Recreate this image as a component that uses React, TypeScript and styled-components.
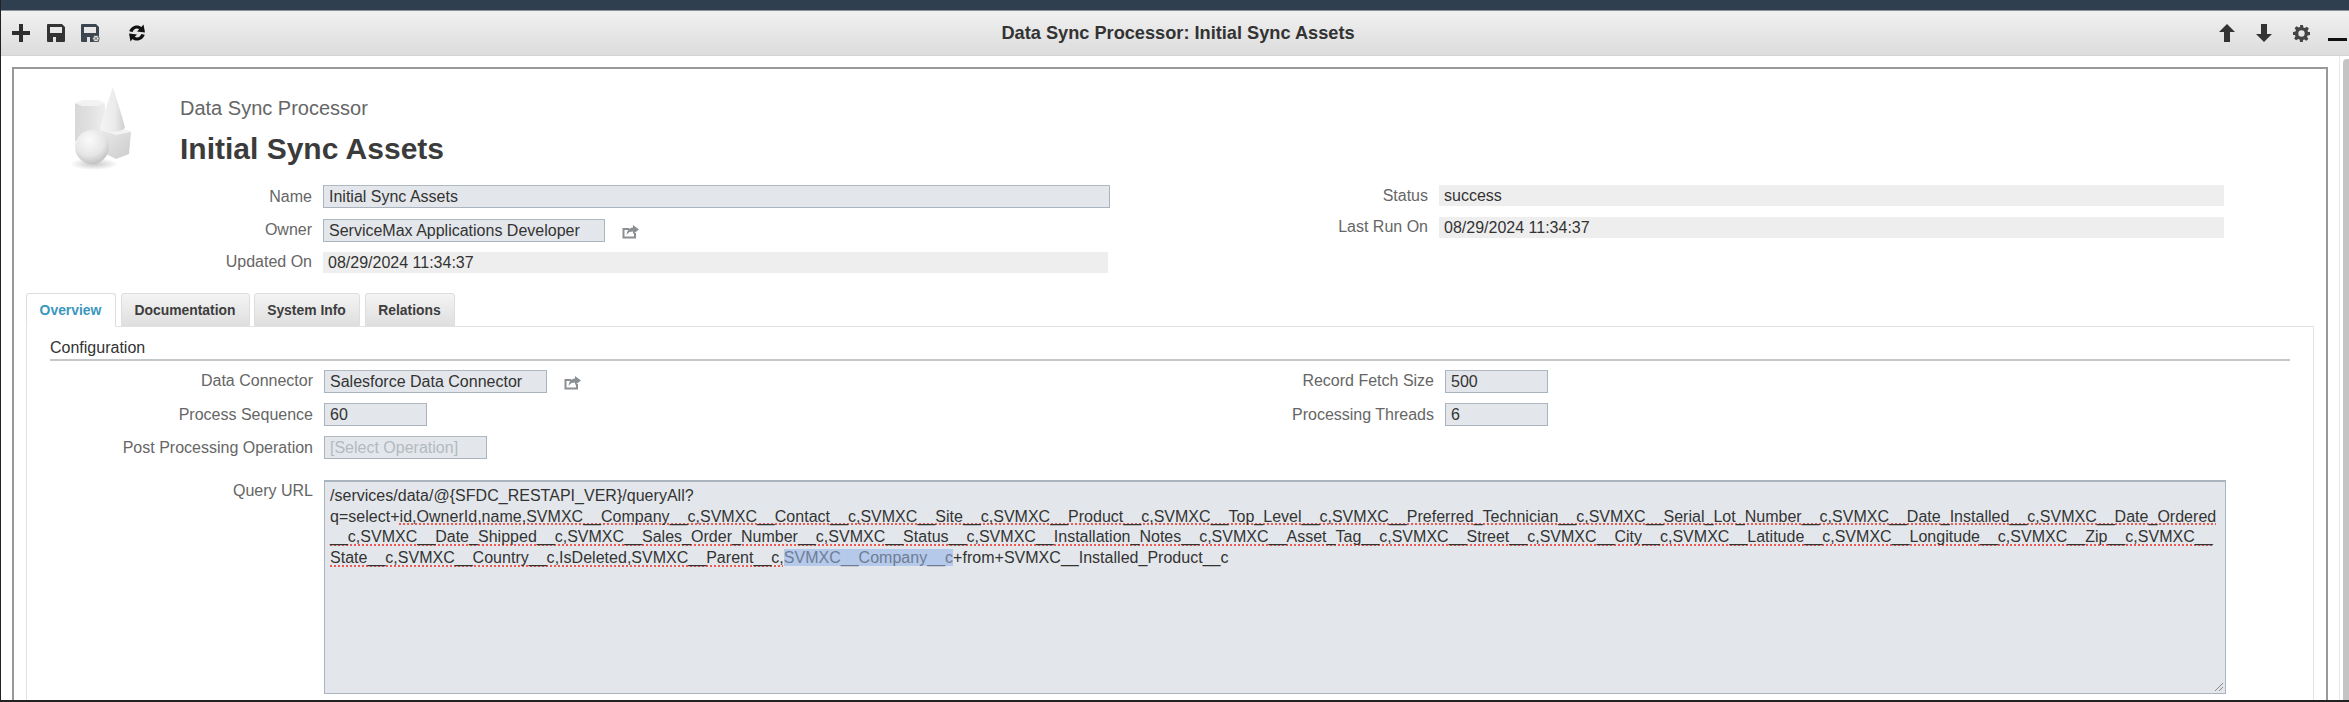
import React from 'react'
import styled, { createGlobalStyle } from 'styled-components'

const GlobalStyle = createGlobalStyle`
  html, body {
    margin: 0;
    padding: 0;
    height: 100%;
    overflow: hidden;
    background: #fff;
  }
  body {
    font-family: 'Liberation Sans', Arial, sans-serif;
    font-size: 16px;
    color: #333;
  }
`

const Page = styled.div`
  width: 2349px;
  height: 702px;
  box-sizing: border-box;
  display: flex;
  flex-direction: column;
  border-left: 1px solid #222;
  border-bottom: 2px solid #222;
  overflow: hidden;
`

const TopStrip = styled.div`
  height: 10px;
  flex: none;
  background: #2f3f4f;
  border-bottom: 1px solid #8b9299;
`

const Toolbar = styled.div`
  height: 44px;
  flex: none;
  display: grid;
  grid-template-columns: 1fr auto 1fr;
  align-items: center;
  background: linear-gradient(#f1f1f1, #dcdcdc);
  border-bottom: 1px solid #d4d4d4;
`

const ToolGroup = styled.div<{ $end?: boolean }>`
  display: flex;
  align-items: center;
  justify-content: ${(p) => (p.$end ? 'flex-end' : 'flex-start')};
`

const ToolIcon = styled.svg<{ $left: number }>`
  display: block;
  flex: none;
  margin-left: ${(p) => p.$left}px;
`

const Minimize = styled.span`
  width: 19px;
  height: 3px;
  margin: 12px 2px 0 18px;
  background: #111;
`

const Title = styled.div`
  padding-left: 6px;
  font-size: 18.2px;
  font-weight: 700;
  color: #333;
`

const Workspace = styled.div`
  flex: 1;
  min-height: 0;
  display: flex;
  padding-left: 11px;
`

const Panel = styled.div`
  flex: 1;
  min-width: 0;
  box-sizing: border-box;
  margin-top: 11px;
  border: 2px solid #999;
  border-bottom: 0;
  padding: 0 12px;
  background: #fff;
`

const ScrollRail = styled.div`
  flex: none;
  width: 10px;
  box-sizing: border-box;
  margin-left: 11px;
  padding: 3px 0 0 3px;
  border-left: 1px solid #e8e8e8;
  display: flex;
`

const ScrollThumb = styled.div`
  flex: 1;
  background: #c4c4c4;
  border-radius: 4px 0 0 0;
`

const Header = styled.header`
  height: 110px;
  display: flex;
  align-items: flex-start;
`

const Logo = styled.svg`
  flex: none;
  width: 80px;
  height: 96px;
  margin: 16px 0 0 42px;
`

const Heading = styled.div`
  margin: 27px 0 0 32px;
`

const Kicker = styled.div`
  font-size: 20px;
  line-height: 24px;
  color: #666;
`

const RecordName = styled.h1`
  margin: 12px 0 0;
  font-size: 30px;
  line-height: 34px;
  font-weight: 700;
  color: #3b3b3b;
`

const Summary = styled.div`
  display: grid;
  grid-template-columns: 1117px 1fr;
  height: 113px;
  margin-top: 1px;
`

const Column = styled.div`
  display: flex;
  flex-direction: column;
`

const Row = styled.div<{ $height: number }>`
  display: flex;
  align-items: center;
  height: ${(p) => p.$height}px;
`

const Label = styled.label<{ $width: number }>`
  flex: none;
  width: ${(p) => p.$width}px;
  margin-right: 11px;
  text-align: right;
  font-size: 16px;
  color: #666;
`

const Input = styled.div<{ $width: number; $muted?: boolean }>`
  flex: none;
  box-sizing: border-box;
  width: ${(p) => p.$width}px;
  height: 23px;
  line-height: 21px;
  padding-left: 5px;
  background: #e3e7eb;
  border: 1px solid #aab4bf;
  border-top-color: #b0b8c0;
  font-size: 16px;
  color: ${(p) => (p.$muted ? '#b4b9bf' : '#333')};
`

const ReadOnly = styled.div<{ $width: number }>`
  flex: none;
  box-sizing: border-box;
  width: ${(p) => p.$width}px;
  height: 21px;
  line-height: 22px;
  padding-left: 5px;
  background: #eeeeee;
  font-size: 16px;
  color: #333;
`

const LinkIcon = styled.svg`
  flex: none;
  width: 18px;
  height: 14px;
  margin: 4px 0 0 17px;
`

const Tabs = styled.div`
  display: flex;
  align-items: flex-end;
  height: 33px;
`

const Tab = styled.div<{ $active?: boolean; $gap: number; $width: number }>`
  flex: none;
  box-sizing: border-box;
  width: ${(p) => p.$width}px;
  height: ${(p) => (p.$active ? 34 : 33)}px;
  margin-left: ${(p) => p.$gap}px;
  margin-bottom: ${(p) => (p.$active ? -1 : 0)}px;
  padding-right: 1px;
  position: relative;
  z-index: ${(p) => (p.$active ? 1 : 0)};
  text-align: center;
  line-height: 32px;
  font-size: 13.9px;
  font-weight: 700;
  border: 1px solid #ddd;
  border-bottom-color: ${(p) => (p.$active ? '#fff' : '#ddd')};
  border-radius: 3px 3px 0 0;
  color: ${(p) => (p.$active ? '#3a97bd' : '#3d3d3d')};
  background: ${(p) => (p.$active ? '#fff' : 'linear-gradient(#f4f4f4, #dfdfdf)')};
`

const TabBody = styled.section`
  box-sizing: border-box;
  height: 374px;
  padding: 0 23px;
  border: 1px solid #e2e2e2;
  border-bottom: 0;
`

const SectionTitle = styled.h2`
  margin: 0;
  height: 34px;
  box-sizing: border-box;
  padding-top: 11px;
  font-size: 16px;
  line-height: 20px;
  font-weight: 400;
  color: #333;
  border-bottom: 2px solid #c4c8cb;
`

const ConfigGrid = styled.div`
  display: grid;
  grid-template-columns: 1115px 1fr;
  margin-top: 3px;
`

const QueryRow = styled.div`
  display: flex;
  align-items: flex-start;
  margin-top: 16px;
`

const QueryLabel = styled(Label)`
  line-height: 20px;
  padding-top: 1px;
`

const QueryBox = styled.div`
  flex: none;
  position: relative;
  box-sizing: border-box;
  width: 1902px;
  height: 214px;
  padding: 4px 5px;
  background: #e3e7eb;
  border: 1px solid #aab4bf;
  border-top-width: 2px;
  font-size: 16px;
  line-height: 20.7px;
  letter-spacing: 0.02px;
  color: #333;
`

const QueryLine = styled.div`
  white-space: nowrap;
`

const Spell = styled.span`
  text-decoration: underline dotted #ee5a4f 2px;
  text-decoration-skip-ink: none;
  text-underline-offset: 2px;
`

const Selected = styled.span`
  background: #b5c9ea;
  color: #6f7d94;
`

const Grip = styled.svg`
  position: absolute;
  right: 1px;
  bottom: 1px;
  width: 10px;
  height: 10px;
`

const ShareGlyph = () => (
  <LinkIcon viewBox="0 0 18 14">
    <path d="M13 8v4.5H1.5V4H7" fill="none" stroke="#8a8f94" strokeWidth="2" />
    <path d="M11 0l6 4.5L11 9V6.4C8 6.4 6 7.5 4.6 10 4.9 6 7 2.8 11 2.6z" fill="#8a8f94" />
  </LinkIcon>
)

const Shapes = () => (
  <Logo viewBox="0 0 80 96">
    <defs>
      <linearGradient id="prism" x1="0" x2="1" y1="0" y2="0">
        <stop offset="0" stopColor="#d8d8d8" />
        <stop offset="0.45" stopColor="#e0e0e0" />
        <stop offset="1" stopColor="#eeeeee" />
      </linearGradient>
      <linearGradient id="cone" x1="0" x2="1" y1="0" y2="0">
        <stop offset="0" stopColor="#f4f4f4" />
        <stop offset="0.6" stopColor="#ebebeb" />
        <stop offset="1" stopColor="#cecece" />
      </linearGradient>
      <linearGradient id="cube" x1="0" x2="1" y1="0" y2="1">
        <stop offset="0" stopColor="#ececec" />
        <stop offset="1" stopColor="#cbcbcb" />
      </linearGradient>
      <radialGradient id="ball" cx="0.42" cy="0.3" r="0.75">
        <stop offset="0" stopColor="#fafafa" />
        <stop offset="0.6" stopColor="#e6e6e6" />
        <stop offset="1" stopColor="#bcbcbc" />
      </radialGradient>
      <radialGradient id="shade">
        <stop offset="0" stopColor="#999" stopOpacity="0.55" />
        <stop offset="1" stopColor="#999" stopOpacity="0" />
      </radialGradient>
    </defs>
    <ellipse cx="26" cy="79" rx="24" ry="6" fill="url(#shade)" />
    <path d="M7 18l8 3h14l8-3v38H7z" fill="url(#prism)" />
    <path d="M7 18l8-3h15l7 3-8 3H15z" fill="#f2f2f2" />
    <path d="M32 45l15-3 16 5-2 22-13 5-16-8z" fill="url(#cube)" />
    <path d="M32 45l15-3 16 5-15 3z" fill="#f3f3f3" />
    <path d="M45 2c4 14 9 28 12 41-5 5-21 5-25 1C35 30 41 14 45 2z" fill="url(#cone)" />
    <circle cx="24" cy="62" r="17" fill="url(#ball)" />
  </Logo>
)

const App = () => (
  <>
    <GlobalStyle />
    <Page>
      <TopStrip />
      <Toolbar>
        <ToolGroup>
          <ToolIcon $left={11} width="18" height="18" viewBox="0 0 18 18">
            <path d="M7 0h4v7h7v4h-7v7H7v-7H0V7h7z" fill="#2e2e2e" />
          </ToolIcon>
          <ToolIcon $left={17} width="18" height="18" viewBox="0 0 18 18">
            <path d="M1 0h14l3 3v14a1 1 0 0 1-1 1H1a1 1 0 0 1-1-1V1a1 1 0 0 1 1-1zM3 3v6h12V3zM6 13v5h3v-5z" fill="#333" fillRule="evenodd" />
          </ToolIcon>
          <ToolIcon $left={16} width="19" height="18" viewBox="0 0 19 18">
            <path d="M1 0h14l3 3v14a1 1 0 0 1-1 1H1a1 1 0 0 1-1-1V1a1 1 0 0 1 1-1zM3 3v6h12V3zM6 13v5h3v-5z" fill="#3c4650" fillRule="evenodd" />
            <circle cx="15" cy="14.5" r="3.2" fill="#e4e4e4" stroke="#555" strokeWidth="1" />
            <path d="M13.7 13.2l2.6 2.6m0-2.6l-2.6 2.6" stroke="#555" strokeWidth="1" />
          </ToolIcon>
          <ToolIcon $left={28} width="18" height="18" viewBox="0 0 18 18">
            <path d="M9 1.500c1.700 0 3.200.6 4.400 1.600L15.500.5 17 8.500l-8-1 2.200-2.300C10.600 4.800 9.800 4.600 9 4.600 6.900 4.600 5.200 6 4.700 8L1.300 7.300C2.200 4 5.300 1.500 9 1.500z" fill="#111" />
            <path d="M9 16.500c-1.700 0-3.200-.6-4.400-1.600L2.500 17.500 1 9.500l8 1-2.200 2.300c.6.4 1.400.6 2.200.6 2.100 0 3.800-1.400 4.300-3.400l3.400.7c-.9 3.300-4 5.800-7.700 5.800z" fill="#111" />
          </ToolIcon>
        </ToolGroup>
        <Title>Data Sync Processor: Initial Sync Assets</Title>
        <ToolGroup $end>
          <ToolIcon $left={0} width="16" height="18" viewBox="0 0 16 18">
            <path d="M8 0l8 8h-5v10H5V8H0z" fill="#333" />
          </ToolIcon>
          <ToolIcon $left={21} width="16" height="18" viewBox="0 0 16 18">
            <path d="M8 18L0 10h5V0h6v10h5z" fill="#333" />
          </ToolIcon>
          <ToolIcon $left={21} width="17" height="17" viewBox="0 0 24 24">
            <path
              fill="#444"
              fillRule="evenodd"
              d="M10 0h4l.7 3.400 2 .8 2.900-1.900 2.800 2.800-1.900 2.900.8 2L24 10v4l-3.400.7-.8 2 1.900 2.900-2.800 2.800-2.900-1.900-2 .8L14 24h-4l-.7-3.400-2-.8-2.900 1.900-2.800-2.800 1.900-2.900-.8-2L0 14v-4l3.400-.7.8-2-1.900-2.900 2.800-2.800 2.900 1.900 2-.8zM12 7.500a4.500 4.500 0 1 0 0 9 4.500 4.500 0 0 0 0-9z"
            />
          </ToolIcon>
          <Minimize />
        </ToolGroup>
      </Toolbar>
      <Workspace>
        <Panel>
          <Header>
            <Shapes />
            <Heading>
              <Kicker>Data Sync Processor</Kicker>
              <RecordName>Initial Sync Assets</RecordName>
            </Heading>
          </Header>
          <Summary>
            <Column>
              <Row $height={33}>
                <Label $width={286}>Name</Label>
                <Input $width={787}>Initial Sync Assets</Input>
              </Row>
              <Row $height={34}>
                <Label $width={286}>Owner</Label>
                <Input $width={282}>ServiceMax Applications Developer</Input>
                <ShareGlyph />
              </Row>
              <Row $height={30}>
                <Label $width={286}>Updated On</Label>
                <ReadOnly $width={785}>08/29/2024 11:34:37</ReadOnly>
              </Row>
            </Column>
            <Column>
              <Row $height={31}>
                <Label $width={285}>Status</Label>
                <ReadOnly $width={785}>success</ReadOnly>
              </Row>
              <Row $height={32}>
                <Label $width={285}>Last Run On</Label>
                <ReadOnly $width={785}>08/29/2024 11:34:37</ReadOnly>
              </Row>
            </Column>
          </Summary>
          <Tabs>
            <Tab $active $gap={0} $width={90}>Overview</Tab>
            <Tab $gap={5} $width={129}>Documentation</Tab>
            <Tab $gap={4} $width={106}>System Info</Tab>
            <Tab $gap={5} $width={90}>Relations</Tab>
          </Tabs>
          <TabBody>
            <SectionTitle>Configuration</SectionTitle>
            <ConfigGrid>
              <Column>
                <Row $height={34}>
                  <Label $width={263}>Data Connector</Label>
                  <Input $width={223}>Salesforce Data Connector</Input>
                  <ShareGlyph />
                </Row>
                <Row $height={33}>
                  <Label $width={263}>Process Sequence</Label>
                  <Input $width={103}>60</Input>
                </Row>
                <Row $height={33}>
                  <Label $width={263}>Post Processing Operation</Label>
                  <Input $width={163} $muted>[Select Operation]</Input>
                </Row>
              </Column>
              <Column>
                <Row $height={34}>
                  <Label $width={269}>Record Fetch Size</Label>
                  <Input $width={103}>500</Input>
                </Row>
                <Row $height={33}>
                  <Label $width={269}>Processing Threads</Label>
                  <Input $width={103}>6</Input>
                </Row>
              </Column>
            </ConfigGrid>
            <QueryRow>
              <QueryLabel $width={263}>Query URL</QueryLabel>
              <QueryBox>
                <QueryLine>/services/data/@{'{'}SFDC_RESTAPI_VER{'}'}/queryAll?</QueryLine>
                <QueryLine>
                  q=select+
                  <Spell>id,OwnerId,name,SVMXC__Company__c,SVMXC__Contact__c,SVMXC__Site__c,SVMXC__Product__c,SVMXC__Top_Level__c,SVMXC__Preferred_Technician__c,SVMXC__Serial_Lot_Number__c,SVMXC__Date_Installed__c,SVMXC__Date_Ordered</Spell>
                </QueryLine>
                <QueryLine>
                  <Spell>__c,SVMXC__Date_Shipped__c,SVMXC__Sales_Order_Number__c,SVMXC__Status__c,SVMXC__Installation_Notes__c,SVMXC__Asset_Tag__c,SVMXC__Street__c,SVMXC__City__c,SVMXC__Latitude__c,SVMXC__Longitude__c,SVMXC__Zip__c,SVMXC__</Spell>
                </QueryLine>
                <QueryLine>
                  <Spell>State__c,SVMXC__Country__c,IsDeleted,SVMXC__Parent__c,</Spell>
                  <Selected>SVMXC__Company__c</Selected>
                  +from+SVMXC__Installed_Product__c
                </QueryLine>
                <Grip viewBox="0 0 10 10">
                  <path d="M1 9l8-8M5 9l4-4" stroke="#888" strokeWidth="1" />
                </Grip>
              </QueryBox>
            </QueryRow>
          </TabBody>
        </Panel>
        <ScrollRail>
          <ScrollThumb />
        </ScrollRail>
      </Workspace>
    </Page>
  </>
)

export default App
